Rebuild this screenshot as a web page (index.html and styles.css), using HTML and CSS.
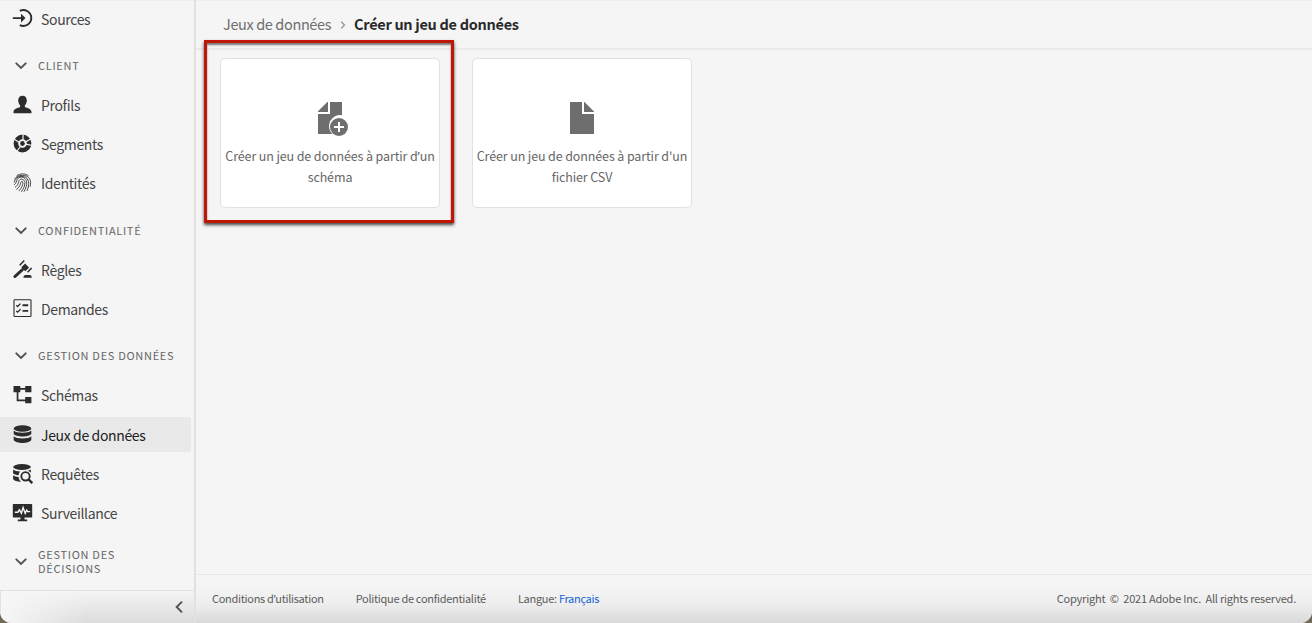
FILE: index.html
```html
<!DOCTYPE html>
<html lang="fr">
<head>
<meta charset="utf-8">
<title>Créer un jeu de données</title>
<link rel="stylesheet" href="styles.css">
</head>
<body>
<div class="app">
  <aside class="sidebar">
    <nav class="nav">
      <a class="item"><svg class="icon" viewBox="0 0 20 20"><path d="M7.300 2.800A8 8 0 1 1 7.300 17.200" transform="translate(0 -1)" fill="none" stroke="currentColor" stroke-width="1.900"/><path d="M.3 8.200h8.200V4.800L13 9.100l-4.500 4.300V10H.3z" fill="currentColor"/></svg><span>Sources</span></a>
      <h2 class="group"><svg class="chevron" viewBox="0 0 12 8"><path d="M1.300 1.300 6 6l4.700-4.700"/></svg><span>CLIENT</span></h2>
      <a class="item"><svg class="icon" viewBox="0 0 20 20"><path d="M10 .8c2.700 0 4.300 2 4.300 4.700 0 2-.8 3.800-2 4.900v1c0 .5.300.8.9 1 3.400.8 5.800 2 5.800 4.600v1.200H1v-1.200c0-2.600 2.400-3.800 5.800-4.600.6-.2.900-.5.900-1v-1c-1.200-1.100-2-2.900-2-4.900C5.700 2.800 7.300.8 10 .8z" fill="currentColor"/></svg><span>Profils</span></a>
      <a class="item"><svg class="icon" viewBox="0 0 20 20"><circle cx="10" cy="9.500" r="6.600" fill="none" stroke="currentColor" stroke-width="4.600"/><circle cx="10" cy="9.500" r="2.400" fill="currentColor"/><path d="M10.500 6V-1M12 8.500l8-4.500M13 10.200l7 1.300M8.300 12l-4.500 6M7 8.500.5 4.500" stroke="#f5f5f5" stroke-width="1.200"/></svg><span>Segments</span></a>
      <a class="item"><svg class="icon" viewBox="0 0 20 20"><g fill="none" stroke="currentColor" stroke-width=".85" stroke-linecap="round"><path d="M4.500 2.600C7.500.3 12.500.3 15.700 2.600M2.200 5.700C5.200 1.300 14.300.9 17.200 5.900c1.200 2.100 1.100 4.900.5 7.400M1.700 9C2.400 2.300 14 .8 16 8.300c.7 3-.1 6.300-1.400 9.200M1.900 11.700c2.800-1.800 1.600-5.400 4.300-6.900 3.400-1.900 7.600.4 8 4.100.3 3.300-.9 6.700-2.600 9.500M2.800 14.100c4-2.200 2.500-5.800 4.400-7.300 2-1.500 5.100 0 5.200 2.700.1 3.400-1.500 6.500-3.400 9M4.200 16.200c4.500-2.900 3.400-7.700 5.200-7.800 2.200 0 .5 6.200-2.900 9.400"/></g></svg><span>Identités</span></a>
      <h2 class="group"><svg class="chevron" viewBox="0 0 12 8"><path d="M1.300 1.300 6 6l4.700-4.700"/></svg><span>CONFIDENTIALITÉ</span></h2>
      <a class="item"><svg class="icon" viewBox="0 0 20 20"><path d="m2.300 16.600 7.700-7" stroke="currentColor" stroke-width="2.800" stroke-linecap="round"/><path d="m12.700 3.600 3.900 4.100-3.900 3.600-3.900-4.100z" fill="currentColor"/><path d="m7.200 5.200 4.600-4.700M15 12.200l4.200-4.300" stroke="currentColor" stroke-width="1.500"/><path d="M10.800 17.700c.3-1.800 1-2.700 2.400-2.700h3.800c1.400 0 2.100.9 2.300 2.700z" fill="currentColor"/></svg><span>Règles</span></a>
      <a class="item"><svg class="icon" viewBox="0 0 20 20"><rect x="1.500" y=".8" width="17" height="16.700" rx=".7" fill="none" stroke="currentColor" stroke-width="1.100"/><path d="m3.800 6.300 1.300 1.200L8 4.600M3.800 11.900l1.300 1.200L8 10.200" fill="none" stroke="currentColor" stroke-width="1.300"/><path d="M10 6.300h5.700M10 11.900h5.700" stroke="currentColor" stroke-width="1.900"/></svg><span>Demandes</span></a>
      <h2 class="group"><svg class="chevron" viewBox="0 0 12 8"><path d="M1.300 1.300 6 6l4.700-4.700"/></svg><span>GESTION DES DONNÉES</span></h2>
      <a class="item"><svg class="icon" viewBox="0 0 20 20"><path d="M1 1h6.800v2h4.900V1h6.200v6.200h-6.200V4.700H7.800v2.500H5.900v7.400h6.800v-2.500h6.200v6.200h-6.200v-2H4.200V7.200H1z" fill="currentColor"/></svg><span>Schémas</span></a>
      <a class="item selected"><svg class="icon" viewBox="0 0 20 20"><g fill="currentColor"><ellipse cx="10" cy="3.500" rx="8.800" ry="3.200"/><path d="M1.200 5.500C3.500 8.400 16.500 8.400 18.800 5.500v3.600c-2.200 3.300-15.400 3.300-17.600 0zM1.200 11.200c2.300 2.900 15.300 2.900 17.600 0v3.900c-2.200 4-15.400 4-17.600 0z"/></g></svg><span>Jeux de données</span></a>
      <a class="item"><svg class="icon" viewBox="0 0 20 20"><g fill="currentColor"><ellipse cx="9.500" cy="3" rx="8.900" ry="2.900"/><path d="M.6 5.400c1.500 1.300 4.200 1.900 7.100 2A7 7 0 0 0 6 11.300C3.500 11 1.200 10.300.6 9.200zM.6 11.300c1.300 1 3.500 1.500 5.500 1.700.2 2 1.100 3.700 2.600 4.900C4.800 17.800 1.400 16.800.6 15.100zM14.700 6.800c1.400-.3 2.900-.8 3.700-1.400v3.400c-.8-1-2.300-1.700-3.700-2z"/></g><circle cx="13" cy="12.300" r="4.200" fill="none" stroke="currentColor" stroke-width="1.900"/><path d="m16 15.400 3.800 3.700" stroke="currentColor" stroke-width="2.400"/></svg><span>Requêtes</span></a>
      <a class="item"><svg class="icon" viewBox="0 0 20 20"><path d="M1 1h18q.7 0 .7.700v12.100q0 .7-.7.700h-7v2h2.700v1.700H5.300v-1.700H8v-2H1q-.7 0-.7-.7V1.700Q.3 1 1 1z" fill="currentColor"/><path d="M2.300 9.200h3l1.600-2.400 2 3.400 1.700-5.700 2.100 5.900 1.500-3.300 1 1.500h2.500" fill="none" stroke="#f5f5f5" stroke-width="1.400"/></svg><span>Surveillance</span></a>
      <h2 class="group last"><svg class="chevron" viewBox="0 0 12 8"><path d="M1.300 1.300 6 6l4.700-4.700"/></svg><span>GESTION DES<br>DÉCISIONS</span></h2>
    </nav>
    <div class="collapse"><svg class="back" viewBox="0 0 8 12"><path d="M6.500 1.200 1.700 6l4.800 4.800"/></svg></div>
  </aside>
  <main class="main">
    <header class="breadcrumb"><span class="parent">Jeux de données</span><svg class="sep" viewBox="0 0 6 8"><path d="m1.200.7 3.300 3.300-3.300 3.300"/></svg><strong class="current">Créer un jeu de données</strong></header>
    <section class="cards">
      <div class="highlight">
        <article class="card"><svg class="glyph" viewBox="0 0 32 36"><path d="M4 11v-.7L13.300 1h.7v10zM16 1h12v13.200a11 11 0 0 0-9.600 18.800H4.500q-.5 0-.5-.5V13h12z"/><circle cx="25" cy="26" r="9"/><path class="plus" d="M25 21v10M20 26h10"/></svg><p class="schema">Créer un jeu de données à partir d<span class="apos">’</span>un<br>schéma</p></article>
      </div>
      <article class="card"><svg class="glyph" viewBox="0 0 32 36"><path d="M4.500 1H16v12h12v19.500q0 .5-.5.5h-23q-.5 0-.5-.5v-31q0-.5.5-.5zM18 1h.5L28 10.500v.5H18z"/></svg><p class="csv">Créer un jeu de données à partir d'un<br>fichier CSV</p></article>
    </section>
    <footer class="footer"><span class="terms">Conditions d<span class="apos">’</span>utilisation</span><span class="privacy">Politique de confidentialité</span><span class="language">Langue: <a>Français</a></span><span class="copyright">Copyright&nbsp; ©&nbsp; 2021 Adobe Inc.&nbsp; All rights reserved.</span></footer>
  </main>
</div>
</body>
</html>
```
FILE: styles.css
```css
* { box-sizing: border-box; }
body { margin: 0; background: #71695b; font-family: "Noto Sans CJK SC", "Noto Sans", sans-serif; line-height: 20px; color: #464646; }
.app { display: flex; width: 100vw; height: 623px; overflow: hidden; background: #f5f5f5; border-radius: 0 0 12px 12px; box-shadow: inset 0 1px #eee; white-space: nowrap; }
.apos { font-family: "Noto Sans", sans-serif; line-height: 1; }
.sidebar { display: flex; flex-direction: column; width: 196px; border-right: 2px solid #e1e1e1; flex: none; }
.nav { height: 590px; padding-top: 1px; overflow: hidden; }
.item { display: flex; align-items: center; width: 191px; height: 35px; margin-bottom: 4.3px; padding-left: 12px; gap: 8px; border-radius: 0 3px 3px 0; font-size: 14px; letter-spacing: -.35px; }
.selected { background: #e9e9e9; color: #222; }
.icon { width: 21px; height: 20px; color: #2c2c2c; overflow: visible; }
.group { display: flex; align-items: center; height: 47px; margin: 0; padding: 4px 0 0 15px; gap: 11px; font-size: 11px; line-height: 14px; font-weight: 400; letter-spacing: .7px; color: #666; }
.group span { margin-top: -2px; }
.last { height: 53px; padding-top: 2px; }
.chevron { width: 12px; height: 8px; }
.chevron path, .back path { fill: none; stroke: #505050; stroke-width: 1.9; stroke-linecap: round; }
.collapse { display: flex; height: 33px; padding: 10px 11px 0; justify-content: flex-end; border-top: 1px solid #e1e1e1; border-left: 1px solid #e1e1e1; background: linear-gradient(90deg, #f6f6f6 0, #f6f6f600 45%), linear-gradient(#f4f4f4, #dcdcdc); }
.back { width: 8px; height: 12px; }
.main { display: flex; flex: 1; flex-direction: column; min-width: 0; }
.breadcrumb { display: flex; align-items: center; height: 50px; padding-left: 27px; border-bottom: 2px solid #eaeaea; font-size: 14.5px; letter-spacing: -.37px; color: #6e6e6e; }
.sep { width: 6px; height: 8px; margin: 2px 8px 0 9px; }
.sep path { fill: none; stroke: #8e8e8e; stroke-width: 1.2; }
.current { font-weight: 700; letter-spacing: -.3px; color: #2a2a2a; }
.cards { display: flex; flex: 1; align-items: flex-start; gap: 18px; padding-left: 8px; }
.highlight { height: 183px; margin-top: -10px; padding: 15px 11px 0 13px; border: 3px solid #be1609; box-shadow: 0 2px 3px #444, inset 0 2px 2px #777; }
.card { display: flex; flex-direction: column; align-items: center; width: 220px; height: 150px; padding-top: 42px; border: 1px solid #e1e1e1; border-radius: 5px; background: #fff; color: #666; }
.cards > .card { margin-top: 8px; }
.card p { margin: 8px 0 0; font-size: 12.5px; line-height: 21px; letter-spacing: -.12px; text-align: center; }
.glyph { width: 32px; height: 36px; fill: #6e6e6e; flex: none; overflow: visible; }
.plus { fill: none; stroke: #fff; stroke-width: 2; }
.footer { display: flex; height: 49px; align-items: center; padding: 0 16px 2px; border-top: 1px solid #e8e8e8; background: linear-gradient(#f5f5f5 20%, #eee 60%, #d9d9d9); font-size: 11px; letter-spacing: -.3px; color: #5c5c5c; }
.privacy { margin-left: 32px; }
.language { margin-left: 32px; }
.language a { color: #1463d2; }
.copyright { margin-left: auto; letter-spacing: -.22px; }
```
